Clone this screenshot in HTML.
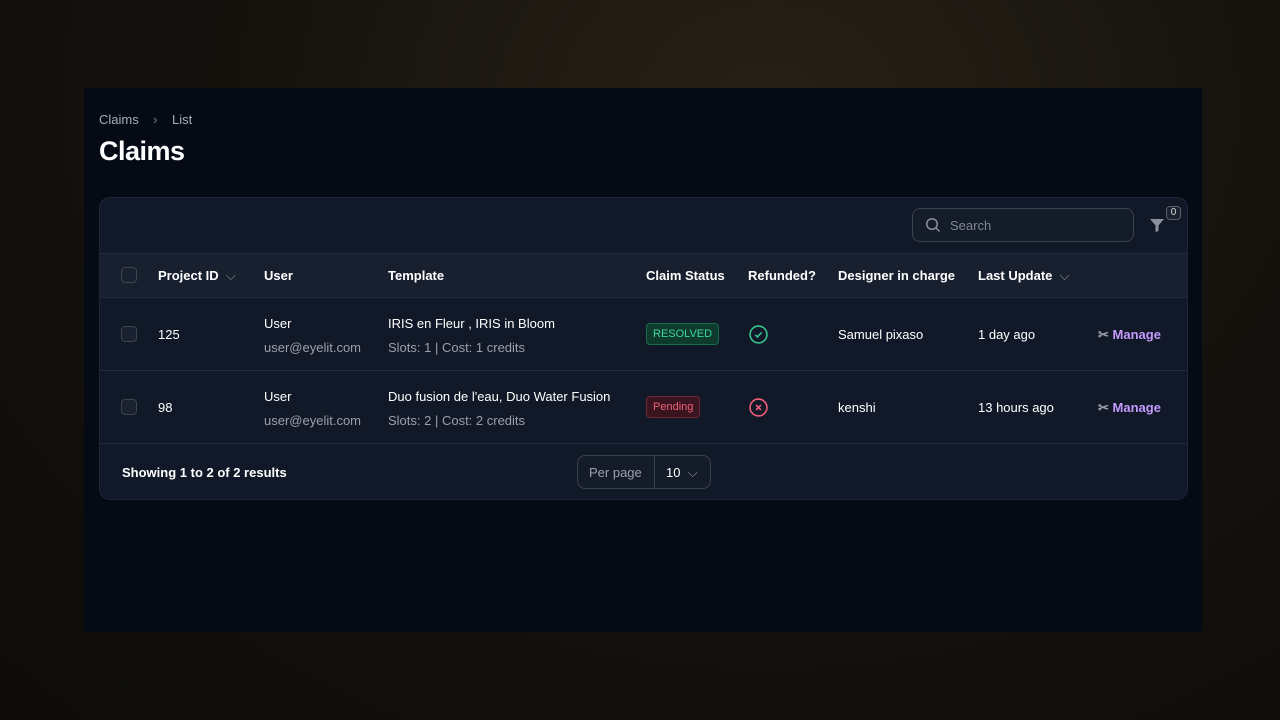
<!DOCTYPE html>
<html><head><meta charset="utf-8"><style>
*{box-sizing:border-box;margin:0;padding:0}
body{width:1280px;height:720px;overflow:hidden;background:radial-gradient(ellipse at 60% 15%,#262116 0%,#15120e 50%,#0d0c0a 100%);font-family:"Liberation Sans",sans-serif;position:relative;color:#fff}
.panel{position:absolute;left:84px;top:88px;width:1118px;height:544px;background:#050a15}
.bc{position:absolute;left:99px;top:112px;font-size:13px;color:#a8aeb8}
h1{position:absolute;left:99px;top:136px;font-size:27px;font-weight:700;color:#fff;letter-spacing:-0.5px}
.card{position:absolute;left:99px;top:197px;width:1089px;height:303px;background:#111827;border:1px solid #1f2735;border-radius:11px;overflow:hidden}
.search{position:absolute;left:812px;top:10px;width:222px;height:34px;border:1px solid #3a4250;border-radius:8px;background:#151c29;color:#7f8794;font-size:13px;padding:9px 0 0 37px}
.thead{position:absolute;left:0;top:55px;width:100%;height:45px;background:#182030;border-top:1px solid #222b3a;border-bottom:1px solid #222b3a}
.t{position:absolute;font-size:13px;white-space:nowrap}
.b{font-weight:700}
.cb{position:absolute;width:16px;height:16px;border:1px solid #3c4452;border-radius:4px;background:#1a2130}
.row{position:absolute;left:0;width:100%;height:73px;border-bottom:1px solid #222b3a}
.g{color:#9aa1ac}
.badge{position:absolute;font-size:11px;padding:4px 6px;border-radius:4px}
.mg{color:#c49bff;font-weight:700}
.pp{position:absolute;left:477px;top:257px;width:134px;height:34px;border:1px solid #3a4250;border-radius:8px;background:#151c29}
</style></head><body>
<div class="panel"></div>
<div class="bc">Claims &nbsp;&nbsp;&nbsp;<span style="color:#7a808a">›</span>&nbsp;&nbsp;&nbsp; List</div>
<h1>Claims</h1>
<div class="card">
 <div class="search"><svg style="position:absolute;left:12px;top:8px" width="16" height="16" viewBox="0 0 16 16" fill="none" stroke="#8a919c" stroke-width="1.5"><circle cx="7" cy="7" r="5.3"/><path d="M11 11l3.5 3.5"/></svg>Search</div>
 <svg style="position:absolute;left:1049px;top:19px" width="16" height="16" viewBox="0 0 16 16"><path d="M1 2h14l-5.5 6.5V14l-3 1V8.5z" fill="#8a919c"/></svg>
 <div style="position:absolute;left:1066px;top:8px;width:15px;height:14px;border:1px solid #5a616c;border-radius:4px;font-size:10px;text-align:center;line-height:12px;color:#ddd;background:#1a2130">0</div>
 <div class="thead">
  <div class="cb" style="left:21px;top:13px"></div>
  <div class="t b" style="left:58px;top:14px">Project ID &nbsp;<span style="color:#8a919c;font-weight:400">⌵</span></div>
  <div class="t b" style="left:164px;top:14px">User</div>
  <div class="t b" style="left:288px;top:14px">Template</div>
  <div class="t b" style="left:546px;top:14px">Claim Status</div>
  <div class="t b" style="left:648px;top:14px">Refunded?</div>
  <div class="t b" style="left:738px;top:14px">Designer in charge</div>
  <div class="t b" style="left:878px;top:14px">Last Update &nbsp;<span style="color:#8a919c;font-weight:400">⌵</span></div>
 </div>
 <div class="row" style="top:100px">
  <div class="cb" style="left:21px;top:28px"></div>
  <div class="t" style="left:58px;top:29px">125</div>
  <div class="t" style="left:164px;top:18px">User</div>
  <div class="t g" style="left:164px;top:42px">user@eyelit.com</div>
  <div class="t" style="left:288px;top:18px">IRIS en Fleur , IRIS in Bloom</div>
  <div class="t g" style="left:288px;top:42px">Slots: 1 | Cost: 1 credits</div>
  <div class="badge" style="left:546px;top:25px;background:#0f3b2e;border:1px solid #1a6a4c;color:#3ed69a">RESOLVED</div>
  <svg style="position:absolute;left:649px;top:27px" width="19" height="19" viewBox="0 0 18 18" fill="none" stroke="#34c48f" stroke-width="1.5"><circle cx="9" cy="9" r="8"/><path d="M6 9.3l2 2 4-4.3"/></svg>
  <div class="t" style="left:738px;top:29px">Samuel pixaso</div>
  <div class="t" style="left:878px;top:29px">1 day ago</div>
  <div class="t mg" style="left:998px;top:29px"><span style="color:#9aa1ac">✂</span> Manage</div>
 </div>
 <div class="row" style="top:173px">
  <div class="cb" style="left:21px;top:28px"></div>
  <div class="t" style="left:58px;top:29px">98</div>
  <div class="t" style="left:164px;top:18px">User</div>
  <div class="t g" style="left:164px;top:42px">user@eyelit.com</div>
  <div class="t" style="left:288px;top:18px">Duo fusion de l'eau, Duo Water Fusion</div>
  <div class="t g" style="left:288px;top:42px">Slots: 2 | Cost: 2 credits</div>
  <div class="badge" style="left:546px;top:25px;background:#3a1520;border:1px solid #6e2535;color:#f0607a">Pending</div>
  <svg style="position:absolute;left:649px;top:27px" width="19" height="19" viewBox="0 0 18 18" fill="none" stroke="#f0607a" stroke-width="1.5"><circle cx="9" cy="9" r="8"/><path d="M6.7 6.7l4.6 4.6M11.3 6.7l-4.6 4.6"/></svg>
  <div class="t" style="left:738px;top:29px">kenshi</div>
  <div class="t" style="left:878px;top:29px">13 hours ago</div>
  <div class="t mg" style="left:998px;top:29px"><span style="color:#9aa1ac">✂</span> Manage</div>
 </div>
 <div class="t b" style="left:22px;top:267px">Showing 1 to 2 of 2 results</div>
 <div class="pp"><div class="t g" style="left:11px;top:9px">Per page</div><div style="position:absolute;left:76px;top:0;width:1px;height:32px;background:#3a4250"></div><div class="t" style="left:88px;top:9px">10 <span style="color:#8a919c">&nbsp;⌵</span></div></div>
</div>
</body></html>
